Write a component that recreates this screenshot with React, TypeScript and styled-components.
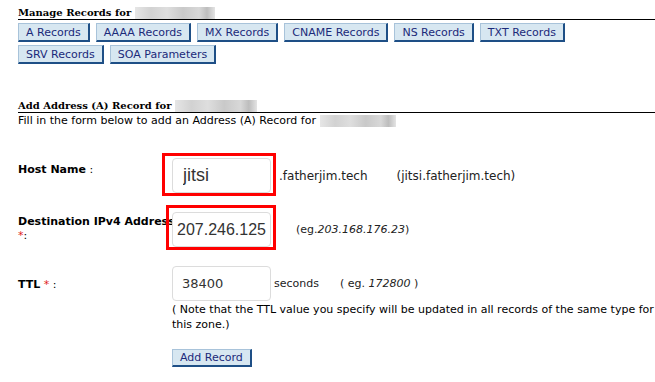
import * as React from 'react';
import styled, { createGlobalStyle } from 'styled-components';

const GlobalStyle = createGlobalStyle`
  body {
    margin: 0;
    background: #ffffff;
    font-family: 'DejaVu Sans', Verdana, sans-serif;
    font-size: 11px;
    color: #000;
  }
`;

const Page = styled.div`
  padding: 6px 0 0 18px;
`;

const SectionTitle = styled.div<{ $gap?: number }>`
  margin-top: ${(p) => p.$gap || 0}px;
  font-family: 'DejaVu Serif', 'Liberation Serif', serif;
  font-weight: bold;
  font-size: 10px;
  line-height: 13px;
  border-bottom: 1px solid #000;
  display: flex;
  align-items: flex-end;
  gap: 4px;
`;

// blurred-out domain name in the original
const Blur = styled.span<{ $w: number }>`
  display: inline-block;
  width: ${(p) => p.$w}px;
  height: 12px;
  background: linear-gradient(
    90deg,
    #e6e6e6 0%,
    #d2d2d2 20%,
    #dedede 40%,
    #c9c9c9 60%,
    #d8d8d8 80%,
    #bdbdbd 90%,
    #e4e4e4 100%
  );
`;

const ButtonBar = styled.div`
  display: flex;
  flex-wrap: wrap;
  gap: 3px 6px;
  margin-top: 3px;
  max-width: 560px;
`;

const NavButton = styled.button`
  height: 19px;
  padding: 0 7px;
  background: #d7e7f1;
  border-style: solid;
  border-width: 1px 2px 2px 1px;
  border-color: #a8c3da #1e4f86 #1e4f86 #a8c3da;
  color: #1b2a7a;
  font-family: 'DejaVu Sans', Verdana, sans-serif;
  font-size: 11px;
  line-height: 15px;
  cursor: pointer;
`;

const Intro = styled.div`
  display: flex;
  align-items: center;
  gap: 4px;
  line-height: 14px;
  margin-top: 1px;
`;

const FieldRow = styled.div<{ $gap: number }>`
  display: grid;
  grid-template-columns: 154px 1fr;
  margin-top: ${(p) => p.$gap}px;
`;

const Label = styled.div<{ $top: number }>`
  padding-top: ${(p) => p.$top}px;
  line-height: 14px;
  b {
    font-weight: bold;
    white-space: nowrap;
  }
`;

const Req = styled.span`
  color: #e02020;
`;

const Cell = styled.div`
  display: flex;
  align-items: center;
`;

const InputWrap = styled.div<{ $box?: [number, number, number, number] }>`
  position: relative;
  display: inline-block;
  ${(p) =>
    p.$box
      ? `&::after {
    content: '';
    position: absolute;
    top: ${-p.$box[0]}px;
    right: ${-p.$box[1]}px;
    bottom: ${-p.$box[2]}px;
    left: ${-p.$box[3]}px;
    border: 3px solid #ff0000;
    pointer-events: none;
  }`
      : ''}
`;

const TextInput = styled.input<{ $size: number; $pad: number; $font?: string }>`
  box-sizing: border-box;
  width: 99px;
  height: 35px;
  padding: 0 0 0 ${(p) => p.$pad}px;
  border: 1px solid #dcdcdc;
  border-radius: 4px;
  background: #fff;
  color: #333;
  font-family: ${(p) => p.$font || "'Liberation Sans', Arial, sans-serif"};
  font-size: ${(p) => p.$size}px;
  outline: none;
`;

const Suffix = styled.span<{ $ml: number; $size?: number }>`
  margin-left: ${(p) => p.$ml}px;
  font-size: ${(p) => p.$size || 11}px;
  color: #222;
  white-space: nowrap;
`;

const Note = styled.div`
  line-height: 15px;
  max-width: 483px;
  margin-top: 1px;
`;

const SubmitButton = styled(NavButton)`
  height: 18px;
  margin-top: 17px;
  line-height: 14px;
`;

const tabs = [
  'A Records',
  'AAAA Records',
  'MX Records',
  'CNAME Records',
  'NS Records',
  'TXT Records',
  'SRV Records',
  'SOA Parameters',
];

const App = () => {
  return (
    <>
      <GlobalStyle />
      <Page>
        <SectionTitle>
          Manage Records for <Blur $w={80} />
        </SectionTitle>
        <ButtonBar>
          {tabs.map((t) => (
            <NavButton key={t}>{t}</NavButton>
          ))}
        </ButtonBar>

        <SectionTitle $gap={35}>
          Add Address (A) Record for <Blur $w={82} />
        </SectionTitle>
        <Intro>
          Fill in the form below to add an Address (A) Record for <Blur $w={76} />
        </Intro>

        <FieldRow $gap={30}>
          <Label $top={5}>
            <b>Host Name</b> :
          </Label>
          <Cell>
            <InputWrap $box={[5, 5, 3, 10]}>
              <TextInput $size={18} $pad={10} defaultValue="jitsi" />
            </InputWrap>
            <Suffix $ml={8} $size={12}>
              .fatherjim.tech
            </Suffix>
            <Suffix $ml={29} $size={12}>
              (jitsi.fatherjim.tech)
            </Suffix>
          </Cell>
        </FieldRow>

        <FieldRow $gap={19}>
          <Label $top={3}>
            <b>Destination IPv4 Address</b> <Req>*</Req>:
          </Label>
          <Cell>
            <InputWrap $box={[7, 5, 3, 6]}>
              <TextInput $size={16} $pad={4} defaultValue="207.246.125" />
            </InputWrap>
            <Suffix $ml={25}>
              (eg.<i>203.168.176.23</i>)
            </Suffix>
          </Cell>
        </FieldRow>

        <FieldRow $gap={19}>
          <Label $top={12}>
            <b>TTL</b> <Req>*</Req> :
          </Label>
          <div>
            <Cell>
              <InputWrap>
                <TextInput
                  $size={13}
                  $pad={9}
                  $font="'DejaVu Sans', Verdana, sans-serif"
                  defaultValue="38400"
                />
              </InputWrap>
              <Suffix $ml={3}>seconds</Suffix>
              <Suffix $ml={21}>
                ( eg. <i>172800</i> )
              </Suffix>
            </Cell>
            <Note>
              ( Note that the TTL value you specify will be updated in all records of the same
              type for this zone.)
            </Note>
            <SubmitButton>Add Record</SubmitButton>
          </div>
        </FieldRow>
      </Page>
    </>
  );
};

export default App;
